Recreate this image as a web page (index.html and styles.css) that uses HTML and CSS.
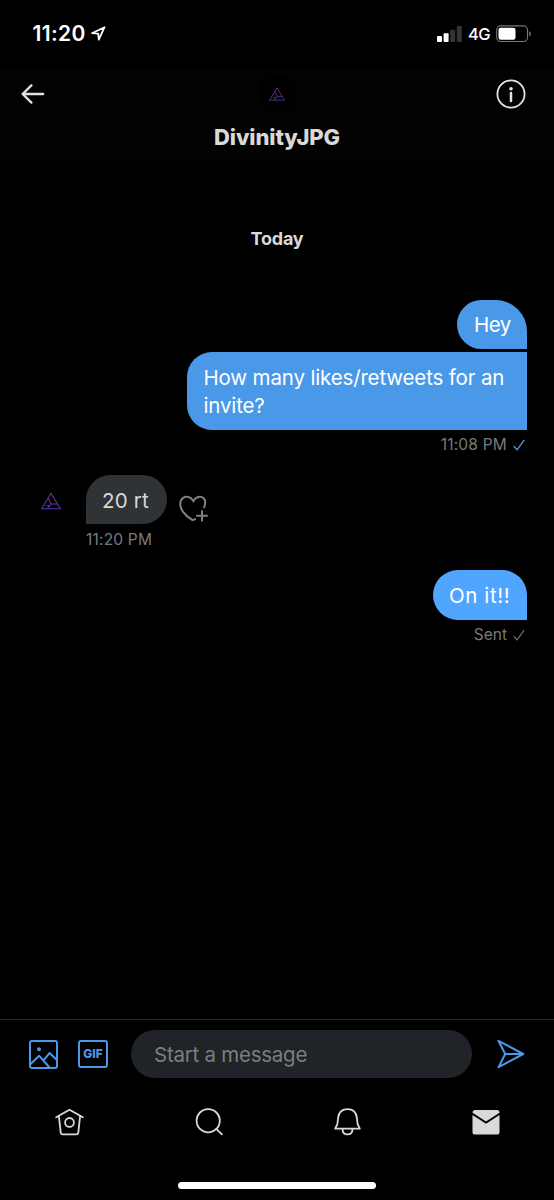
FILE: index.html
```html
<!DOCTYPE html>
<html lang="en">
<head>
<meta charset="utf-8">
<title>DivinityJPG</title>
<link rel="stylesheet" href="styles.css">
</head>
<body>
<svg class="defs" width="0" height="0"><defs>
<linearGradient id="violet" x1="0" y1="0" x2="0" y2="1"><stop offset="0" stop-color="#7c2c83"/><stop offset="1" stop-color="#4b35a5"/></linearGradient>
<symbol id="logo" viewBox="0 0 20 17"><path d="M10 .8 19.3 16.2H.7zM7.1 5.6 10.1 11.5 6.4 16.2M5.4 13H9M10.1 11.5H16.4" fill="none" stroke="url(#violet)" stroke-width="1.1"/></symbol>
</defs></svg>
<div class="phone">
  <div class="status">
    <span class="clock">11:20</span>
    <svg class="location" width="15" height="15" viewBox="0 0 15 15"><path d="M1 7.2 13.5 1.2 7.8 13.6 7.2 7.7z"/></svg>
    <svg class="signal" width="26" height="16" viewBox="0 0 26 16"><g fill="#fff"><rect x="0" y="10" width="5" height="6" rx="1"/><rect x="6.6" y="7.2" width="5" height="8.8" rx="1"/></g><g fill="#343434"><rect x="13.2" y="3.8" width="5" height="12.2" rx="1"/><rect x="19.8" y="0" width="5" height="16" rx="1"/></g></svg>
    <span class="network">4G</span>
    <svg class="battery" width="36" height="18" viewBox="0 0 36 18"><rect x=".7" y=".9" width="30.8" height="15.6" rx="4" fill="none" stroke="#777" stroke-width="1.1"/><rect x="2.5" y="2.7" width="17" height="12" rx="2.3" fill="#fff"/><path d="M33.2 6.2c2.2.6 2.2 4.4 0 5z" fill="#777"/></svg>
  </div>
  <header class="header">
    <div class="header-row">
      <svg width="24" height="22" viewBox="0 0 24 22"><path d="M22.2 11H2M10.4 2.4 1.6 11l8.8 8.6" class="back"/></svg>
      <span class="avatar"><svg width="16" height="14"><use href="#logo"/></svg></span>
      <svg width="30" height="30" viewBox="0 0 30 30"><circle cx="15" cy="15" r="13.6" fill="none" stroke="#e3e3e3" stroke-width="1.8"/><circle cx="15" cy="9.7" r="1.8" fill="#e3e3e3"/><path d="M15 14v8" stroke="#e3e3e3" stroke-width="2.5" stroke-linecap="round"/></svg>
    </div>
    <h1 class="title">DivinityJPG</h1>
  </header>
  <main class="chat">
    <div class="day">Today</div>
    <div class="bubble sent hey">Hey</div>
    <div class="bubble sent question">How many likes/retweets for an<br>invite?</div>
    <div class="meta meta-sent"><span class="time">11:08 PM</span><svg width="12" height="12" viewBox="0 0 12 12"><path d="m.8 7.3 3.3 3.5L11.2 1" fill="none" stroke="#4a99e9" stroke-width="1.3"/></svg></div>
    <div class="incoming">
      <svg class="sender" width="20" height="18"><use href="#logo"/></svg>
      <div class="bubble received">20 rt</div>
      <svg class="react" width="32" height="29" viewBox="0 0 32 29"><path d="M26.1 14.3c1.4-3.5 1.2-7.5-.7-9.3-3-2.6-7.6-.9-10 3C12.9 4.1 8.4 2.4 5 5 .9 8.1 1.7 14 4.9 18.6c2.6 3.8 6 6.3 9.2 8.3 1.1.2 2.1-.2 3-.8M24 18v9.8M19 22.8h10"/></svg>
    </div>
    <div class="meta meta-received"><span class="time">11:20 PM</span></div>
    <div class="bubble sent latest">On it!!</div>
    <div class="meta meta-latest"><span class="state">Sent</span><svg width="12" height="12" viewBox="0 0 12 12"><path d="m.8 7.3 3.3 3.5L11.2 1" fill="none" stroke="#777b7e" stroke-width="1.1"/></svg></div>
  </main>
  <section class="composer">
    <svg class="photo" width="29" height="29" viewBox="0 0 29 29"><rect x="1" y="1" width="27" height="27" rx="2"/><path d="m1 24.5 9.2-8.7L21 28M14.5 20.3l6-7.2L28 20"/><circle cx="10" cy="9.3" r="2" fill="#4a99e9" stroke="none"/></svg>
    <span class="gif">GIF</span>
    <div class="field">Start a message</div>
    <svg class="send" width="29" height="30" viewBox="0 0 29 30"><path d="M1.5 1.8 26.3 15 1.5 28.2 8.2 15zM8.2 15h18"/></svg>
  </section>
  <nav class="tabs">
    <svg width="30" height="28" viewBox="0 0 30 28"><path d="M1.2 9.3 14.5 1.8l13.3 7.5M3.9 8.2l1.8 16.4q.3 1.8 2 1.8h13.6q1.7 0 2-1.8l1.8-16.4"/><circle cx="14.5" cy="14.4" r="4.4"/></svg>
    <svg width="30" height="28" viewBox="0 0 30 28"><circle cx="14.2" cy="12.7" r="11.6"/><path d="m22.3 20.9 5.6 5.5"/></svg>
    <svg width="30" height="28" viewBox="0 0 30 28"><path d="M3.2 20.7 5.4 16 6.1 9.8C6.8 4.6 10.3 1.2 15.5 1.2s8.7 3.4 9.4 8.6l.7 6.2 2.2 4.7zM10.5 21c0 3.5 2 5.4 5 5.4s5-1.9 5-5.4"/></svg>
    <svg width="30" height="28" viewBox="0 0 30 28"><path class="mail" d="M1.5 4.8q0-2.8 2.7-2.8h21.6q2.7 0 2.7 2.8L15 13.6z"/><path class="mail" d="M1.5 6.9 15 15.7l13.5-8.8v17q0 2.7-2.7 2.7H4.2q-2.7 0-2.7-2.7z"/></svg>
  </nav>
  <div class="home-bar"></div>
</div>
</body>
</html>
```
FILE: styles.css
```css
* { box-sizing: border-box; }
body { margin: 0; background: #000; font-family: Inter, "Liberation Sans", sans-serif; color: #d9d9d9; }
svg { display: block; flex: none; }
.defs { position: absolute; }
.phone { width: 554px; height: 1200px; display: flex; flex-direction: column; overflow: hidden; }
.status { height: 68px; padding: 0 23px 0 32.5px; display: flex; align-items: center; flex: none; color: #fff; }
.clock { font-size: 21px; font-weight: 600; width: 53px; letter-spacing: .35px; margin-top: -2px; }
.location { margin-left: 5px; margin-top: -2px; fill: none; stroke: #fff; stroke-width: 1.8; stroke-linejoin: round; }
.signal { margin-left: auto; margin-top: -1px; }
.network { width: 23px; margin-left: 5px; margin-right: 5px; font-size: 16.5px; font-weight: 500; letter-spacing: -.7px; margin-top: -1px; }
.battery { margin-right: -1px; margin-top: -1px; }
.header { height: 94px; flex: none; background: #020202; }
.header-row { height: 52px; display: grid; grid-template-columns: 1fr 38px 1fr; align-items: center; padding: 0 28px 0 21px; }
.header-row > :first-child { margin-right: 7px; }
.header-row > :nth-child(2) { margin-left: 3.5px; }
.header-row > :last-child { justify-self: end; }
.back { fill: none; stroke: #e1e1e1; stroke-width: 2.3; stroke-linecap: round; stroke-linejoin: round; }
.avatar { width: 38px; height: 38px; border-radius: 50%; display: flex; align-items: center; justify-content: center; background: #000; }
.title { margin: 2px 0 0; text-align: center; font-size: 22px; line-height: 30px; font-weight: 800; letter-spacing: -.1px; }
.chat { flex: 1; padding: 64px 27px 0; display: flex; flex-direction: column; }
.day { height: 74px; line-height: 25px; text-align: center; font-size: 18px; font-weight: 700; letter-spacing: -.2px; }
.bubble { color: #fff; font-size: 20.5px; line-height: 28px; padding: 12px 16px 9px; white-space: nowrap; flex: none; }
.sent { align-self: flex-end; background: #4a99e9; }
.hey { width: 70px; height: 49px; border-radius: 25px 32px 0 25px; padding-left: 17px; letter-spacing: -.5px; padding-top: 11px; }
.question { width: 340px; height: 78px; margin-top: 3px; border-radius: 25px 0 0 25px; padding-left: 16.5px; letter-spacing: -.15px; }
.meta { display: flex; align-items: center; font-size: 15.5px; line-height: 20px; color: #777b7e; }
.meta svg { margin-left: 6px; margin-right: 2px; }
.time { letter-spacing: .2px; }
.meta-sent { height: 20px; margin-top: 5px; justify-content: flex-end; }
.incoming { display: flex; height: 49px; margin-top: 20px; padding-left: 14px; }
.sender { margin-top: 17px; }
.received { width: 81px; height: 49px; margin-left: 25px; background: #2f3336; border-radius: 25px 25px 25px 0; color: #d9d9d9; letter-spacing: .2px; }
.react { margin-left: 11px; margin-top: 18px; fill: none; stroke: #7c8084; stroke-width: 2; stroke-linecap: round; }
.meta-received { height: 20px; margin-top: 6px; padding-left: 59px; }
.latest { width: 94px; height: 50px; margin-top: 20px; background: #50a5ff; border-radius: 25px 25px 0 25px; letter-spacing: .6px; }
.meta-latest { height: 20px; margin-top: 5px; justify-content: flex-end; }
.composer { height: 70px; border-top: 1px solid #2b2e31; display: flex; align-items: center; padding: 0 28px 1px 29px; flex: none; }
.photo, .send { fill: none; stroke: #4a99e9; stroke-width: 2; stroke-linejoin: round; }
.gif { width: 30px; height: 28px; margin-left: 20px; border: 2px solid #4a99e9; border-radius: 3px; color: #4a99e9; font-size: 12px; font-weight: 800; line-height: 24px; text-align: center; }
.field { width: 341px; height: 48px; margin-left: 23px; border-radius: 24px; background: #202327; color: #7b7e81; font-size: 20.5px; line-height: 49px; padding-left: 23px; letter-spacing: -.25px; }
.send { margin-left: auto; }
.tabs { height: 93px; padding: 19px 53px 0 55px; display: flex; justify-content: space-between; flex: none; }
.tabs svg { fill: none; stroke: #d9d9d9; stroke-width: 1.8; stroke-linecap: round; stroke-linejoin: round; }
.tabs .mail { fill: #d9d9d9; stroke: none; }
.home-bar { width: 198px; height: 7px; border-radius: 4px; background: #fff; margin: 0 auto 11px; flex: none; }
```
